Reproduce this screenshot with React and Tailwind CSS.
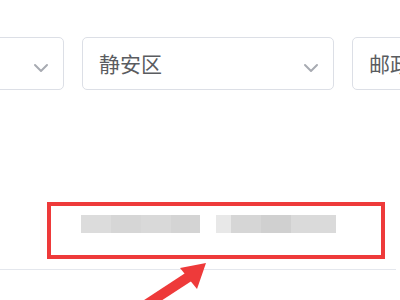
import React from "react";

function Chevron() {
  return (
    <svg width="16" height="10" viewBox="0 0 16 10" className="shrink-0 mt-[8px]">
      <path d="M2 2 L8 8 L14 2" fill="none" stroke="#a8abb2" strokeWidth="2" strokeLinecap="round" strokeLinejoin="round" />
    </svg>
  );
}

function Select({ text, arrow = true }) {
  return (
    <div className="w-[252px] h-[53px] shrink-0 rounded-[5px] border border-[#dcdfe6] bg-white flex items-center justify-between pl-[16px] pr-[14px]">
      <span className="text-[21px] text-[#5a5c60] leading-none whitespace-nowrap" style={{ fontFamily: '"Noto Sans CJK SC", "Noto Sans", sans-serif' }}>{text}</span>
      {arrow && <Chevron />}
    </div>
  );
}

export default function App() {
  return (
    <div className="relative w-[400px] h-[300px] overflow-hidden bg-white">
      <div className="flex gap-[18px] ml-[-188px] pt-[37px]">
        <Select text="" />
        <Select text="静安区" />
        <Select text="邮政编码" arrow={false} />
      </div>
      <div className="mt-[112px] ml-[47px] w-[338px] h-[57px] border-[4px] border-[#ee3a3a] pt-[9px] pl-[30px] flex gap-[16px]">
        <div className="flex h-[18px] blur-[0.6px]">
          <div className="w-[30px] bg-[#dcdcdc]"></div>
          <div className="w-[30px] bg-[#d6d6d6]"></div>
          <div className="w-[30px] bg-[#d9d9d9]"></div>
          <div className="w-[29px] bg-[#d4d4d4]"></div>
        </div>
        <div className="flex h-[18px] blur-[0.6px]">
          <div className="w-[15px] bg-[#e8e8e8]"></div>
          <div className="w-[30px] bg-[#d6d6d6]"></div>
          <div className="w-[30px] bg-[#d0d0d0]"></div>
          <div className="w-[45px] bg-[#dadada]"></div>
        </div>
      </div>
      <div className="mt-[10px] w-[396px] h-px bg-[#e4e7ed]"></div>
      <svg className="absolute left-0 top-0 pointer-events-none" width="400" height="300" viewBox="0 0 400 300">
        <line x1="138" y1="310" x2="190" y2="276" stroke="#ee3a3a" strokeWidth="10" />
        <polygon points="206,263 180,268 197,289" fill="#ee3a3a" />
      </svg>
    </div>
  );
}
